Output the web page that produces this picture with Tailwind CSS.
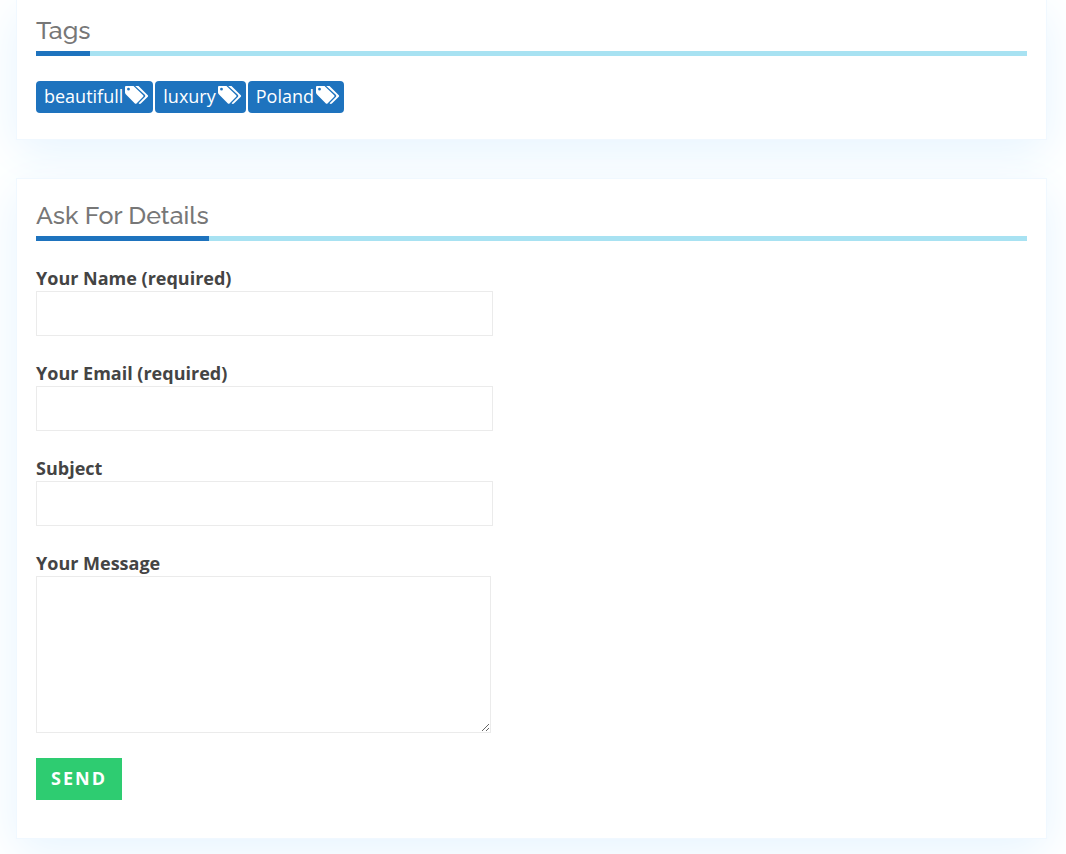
<!DOCTYPE html>
<html lang="en">
<head>
<meta charset="utf-8">
<meta name="viewport" content="width=device-width, initial-scale=1">
<title>Ask For Details</title>
<script src="https://cdn.jsdelivr.net/npm/@tailwindcss/browser@4"></script>
</head>
<body class="min-h-screen bg-white pr-[19px] pl-4 font-['Open_Sans','Noto_Sans',sans-serif] text-lg text-[#444444]">
<svg class="hidden" aria-hidden="true">
  <symbol id="tags" viewBox="0 0 24 20">
    <path fill="currentColor" fill-rule="evenodd" d="M1 1h7.500L18.200 10.200q.8.800 0 1.600l-6.700 6.600q-.8.800-1.600 0L1 9.500q-1-1-1-2V2q0-1 1-1ZM3.500 2.800a1.400 1.400 0 1 0 0 2.800a1.400 1.400 0 0 0 0-2.800Z"/>
    <path fill="currentColor" d="M10.200 1h3.300l9.300 9.200q.8.800 0 1.600l-6.900 6.800q-1.200 1-2.300-.3l6.200-6.200q1.200-1.200 0-2.400Z"/>
  </symbol>
</svg>
<main>
  <section class="border border-t-0 border-[#f0f8ff] bg-white px-[19px] pt-3 pb-[26px] shadow-[0_12px_45px_#e6f4ff]">
    <h2 class="mb-[25px] border-b-[5px] border-[#a8e2f2] font-[Raleway,Lato,sans-serif] text-[25px] leading-[37px] font-medium text-[#777777]"><span class="-mb-[5px] inline-block border-b-[5px] border-[#1e73be] pb-0.5 align-top">Tags</span></h2>
    <ul class="flex flex-wrap gap-0.5 text-white">
      <li><a href="#" class="flex h-8 items-center gap-0.5 rounded-[4px] bg-[#1e73be] pr-1 pl-2 leading-8"><span class="pb-0.5">beautifull</span><svg class="mb-1 h-5 w-6"><use href="#tags"/></svg></a></li>
      <li><a href="#" class="flex h-8 items-center gap-0.5 rounded-[4px] bg-[#1e73be] pr-1 pl-2 leading-8"><span class="pb-0.5">luxury</span><svg class="mb-1 h-5 w-6"><use href="#tags"/></svg></a></li>
      <li><a href="#" class="flex h-8 items-center gap-0.5 rounded-[4px] bg-[#1e73be] pr-1 pl-2 leading-8"><span class="pb-0.5">Poland</span><svg class="mb-1 h-5 w-6"><use href="#tags"/></svg></a></li>
    </ul>
  </section>
  <section class="mt-[38px] border border-[#f0f8ff] bg-white px-[19px] pt-[18px] pb-[38px] shadow-[0_12px_45px_#e6f4ff]">
    <h2 class="mb-[25px] border-b-[5px] border-[#a8e2f2] font-[Raleway,Lato,sans-serif] text-[25px] leading-[37px] font-medium text-[#777777]"><span class="-mb-[5px] inline-block border-b-[5px] border-[#1e73be] pb-0.5 align-top">Ask For Details</span></h2>
    <form class="flex flex-col items-start gap-[25px]">
      <div class="w-full max-w-[457px]"><label for="name" class="block leading-[25px] font-bold">Your Name (required)</label><input id="name" type="text" class="block h-[45px] w-full border border-[#ebebeb] px-2 outline-none"></div>
      <div class="w-full max-w-[457px]"><label for="email" class="block leading-[25px] font-bold">Your Email (required)</label><input id="email" type="email" class="block h-[45px] w-full border border-[#ebebeb] px-2 outline-none"></div>
      <div class="w-full max-w-[457px]"><label for="subject" class="block leading-[25px] font-bold">Subject</label><input id="subject" type="text" class="block h-[45px] w-full border border-[#ebebeb] px-2 outline-none"></div>
      <div class="w-full max-w-[455px]"><label for="message" class="block leading-[25px] font-bold">Your Message</label><textarea id="message" class="block h-[157px] w-full border border-[#ebebeb] px-2 outline-none"></textarea></div>
      <button type="submit" class="h-[42px] bg-[#2ecc71] px-[15px] pb-0.5 font-bold tracking-[2px] text-white">SEND</button>
    </form>
  </section>
</main>
</body>
</html>
